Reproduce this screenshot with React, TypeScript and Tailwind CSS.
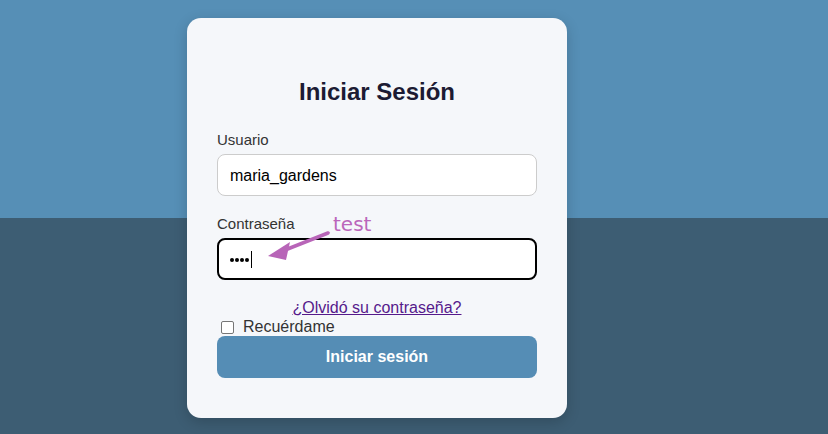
export default function App() {
  return (
    <div className="h-[434px] w-[828px] bg-[linear-gradient(to_bottom,#568fb6_218px,#3d5d73_218px)] pt-[18px] font-['Liberation_Sans',Arial,sans-serif]">
      <div className="relative ml-[187px] flex h-[400px] w-[380px] flex-col rounded-[14px] bg-[#f5f7fa] px-[30px] pt-[56px] shadow-[0_4px_14px_rgba(0,0,0,0.18)]">
        <h2 className="text-center text-[24px] font-bold leading-[36px] text-[#1c1b33]">
          Iniciar Sesión
        </h2>

        <label className="mt-[20px] text-[15px] leading-[20px] text-[#333]">Usuario</label>
        <div className="mt-[4px] flex h-[42px] items-center rounded-[8px] border border-[#ccc] bg-white px-[12px] pt-[1px] text-[16px] text-black">
          maria_gardens
        </div>

        <label className="mt-[18px] text-[15px] leading-[20px] text-[#333]">Contraseña</label>
        <div className="mt-[4px] flex h-[42px] items-center rounded-[8px] border-2 border-black bg-white px-[11px]">
          <span className="mt-[2px] flex gap-[1px]">
            <span className="h-[4px] w-[4px] rounded-full bg-black" />
            <span className="h-[4px] w-[4px] rounded-full bg-black" />
            <span className="h-[4px] w-[4px] rounded-full bg-black" />
            <span className="h-[4px] w-[4px] rounded-full bg-black" />
          </span>
          <span className="ml-[2px] h-[17px] w-px bg-black" />
        </div>

        <a href="#" className="mt-[18px] text-center text-[16px] leading-[20px] text-[#551a8b] underline">
          ¿Olvidó su contraseña?
        </a>

        <label className="flex h-[18px] items-center text-[16px] leading-[20px] text-[#333]">
          <span className="ml-[4px] mr-[9px] h-[13px] w-[13px] rounded-[2px] border border-[#767676] bg-white" />
          Recuérdame
        </label>

        <button className="h-[42px] rounded-[8px] bg-[#558db5] text-[16px] font-bold text-white">
          Iniciar sesión
        </button>

        <span className="absolute left-[146px] top-[194px] font-['DejaVu_Sans',sans-serif] text-[20px] leading-[24px] text-[#bb66bb]">
          test
        </span>
        <svg className="absolute left-[75px] top-[210px]" width="70" height="50" viewBox="0 0 70 50">
          <line x1="66" y1="5" x2="18" y2="24" stroke="#b865b8" strokeWidth="3.5" strokeLinecap="round" />
          <polygon points="6,28 28,14 24,32" fill="#b865b8" />
        </svg>
      </div>
    </div>
  );
}
